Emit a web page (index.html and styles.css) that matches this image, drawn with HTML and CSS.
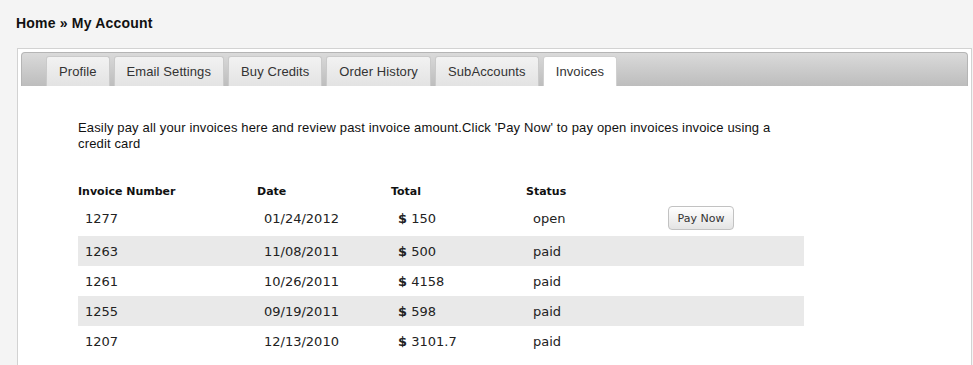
FILE: index.html
```html
<!DOCTYPE html>
<html lang="en">
<head>
    <meta charset="UTF-8">
    <title>My Account - Invoices</title>
    <link rel="stylesheet" href="styles.css">
</head>
<body>
<!-- Breadcrumb -->
<div class="breadcrumb">Home &raquo; My Account</div>

<div class="panel">
    <!-- Tabs -->
    <div class="tab-bar">
        <ul class="tabs">
            <li><a href="#">Profile</a></li>
            <li><a href="#">Email Settings</a></li>
            <li><a href="#">Buy Credits</a></li>
            <li><a href="#">Order History</a></li>
            <li><a href="#">SubAccounts</a></li>
            <li class="active"><a href="#">Invoices</a></li>
        </ul>
    </div>

    <div class="panel-body">
        <p class="intro">Easily pay all your invoices here and review past invoice amount.Click 'Pay Now' to pay open invoices invoice using a credit card</p>

        <table class="invoices">
            <thead>
            <tr>
                <th class="col-num">Invoice Number</th>
                <th class="col-date">Date</th>
                <th class="col-total">Total</th>
                <th class="col-status">Status</th>
                <th></th>
            </tr>
            </thead>
            <tbody>
            <tr class="first">
                <td>1277</td>
                <td>01/24/2012</td>
                <td><b>$</b> 150</td>
                <td>open</td>
                <td><button class="pay-btn">Pay Now</button></td>
            </tr>
            <tr>
                <td>1263</td>
                <td>11/08/2011</td>
                <td><b>$</b> 500</td>
                <td>paid</td>
                <td></td>
            </tr>
            <tr>
                <td>1261</td>
                <td>10/26/2011</td>
                <td><b>$</b> 4158</td>
                <td>paid</td>
                <td></td>
            </tr>
            <tr>
                <td>1255</td>
                <td>09/19/2011</td>
                <td><b>$</b> 598</td>
                <td>paid</td>
                <td></td>
            </tr>
            <tr>
                <td>1207</td>
                <td>12/13/2010</td>
                <td><b>$</b> 3101.7</td>
                <td>paid</td>
                <td></td>
            </tr>
            </tbody>
        </table>
    </div>
</div>
</body>
</html>
```

FILE: styles.css
```css
body {
    font-family: "Liberation Sans", Arial, sans-serif;
    background-color: #f4f4f4;
    color: #222;
    margin: 0;
    padding: 0;
}

/* Breadcrumb */
.breadcrumb {
    font-size: 14px;
    font-weight: bold;
    letter-spacing: 0.2px;
    color: #111;
    padding: 15px 16px 0;
    height: 19px;
    line-height: 16px;
}

/* Panel */
.panel {
    margin: 14px 1px 0 17px;
    background: white;
    border: 1px solid #d2d2d2;
    padding: 3px 3px 0;
}

.tab-bar {
    height: 33px;
    background: linear-gradient(#dadada, #bdbdbd);
    border: 1px solid #b5b5b5;
    border-bottom: none;
    border-radius: 4px 4px 0 0;
}

.tabs {
    list-style: none;
    margin: 0;
    padding: 3px 0 0 24px;
    display: flex;
    gap: 4px;
    height: 30px;
}

.tabs li {
    background: linear-gradient(#f2f2f2, #e3e3e3);
    border: 1px solid #cacaca;
    border-bottom: none;
    border-radius: 3px 3px 0 0;
}

.tabs li a {
    display: block;
    padding: 0 12px;
    line-height: 30px;
    font-size: 13px;
    letter-spacing: 0.1px;
    color: #333;
    text-decoration: none;
}

.tabs li.active {
    background: white;
    border-color: #d0d0d0;
}

/* Body */
.panel-body {
    padding: 34px 0 20px 57px;
}

.intro {
    margin: 0 0 27px;
    max-width: 720px;
    font-size: 13px;
    letter-spacing: 0.15px;
    line-height: 16px;
    color: #111;
}

.invoices {
    width: 726px;
    border-collapse: collapse;
    font-family: "DejaVu Sans", Verdana, sans-serif;
    font-size: 13px;
    color: #222;
}

.invoices th {
    text-align: left;
    font-size: 11px;
    font-weight: bold;
    color: #111;
    padding: 2px 0 3px;
    line-height: 22px;
    vertical-align: top;
}

.col-num { width: 179px; }
.col-date { width: 134px; }
.col-total { width: 135px; }
.col-status { width: 135px; }

.invoices td {
    height: 30px;
    padding: 0 0 0 7px;
    vertical-align: middle;
}

.invoices tr.first td {
    height: 24px;
    padding-bottom: 6px;
}

.invoices tbody tr:nth-child(even) {
    background: #e9e9e9;
}

.pay-btn {
    font-family: "DejaVu Sans", Verdana, sans-serif;
    font-size: 11px;
    color: #333;
    width: 66px;
    height: 24px;
    background: linear-gradient(#ffffff, #e4e4e4);
    border: 1px solid #c2c2c2;
    border-radius: 4px;
    cursor: pointer;
}
```
